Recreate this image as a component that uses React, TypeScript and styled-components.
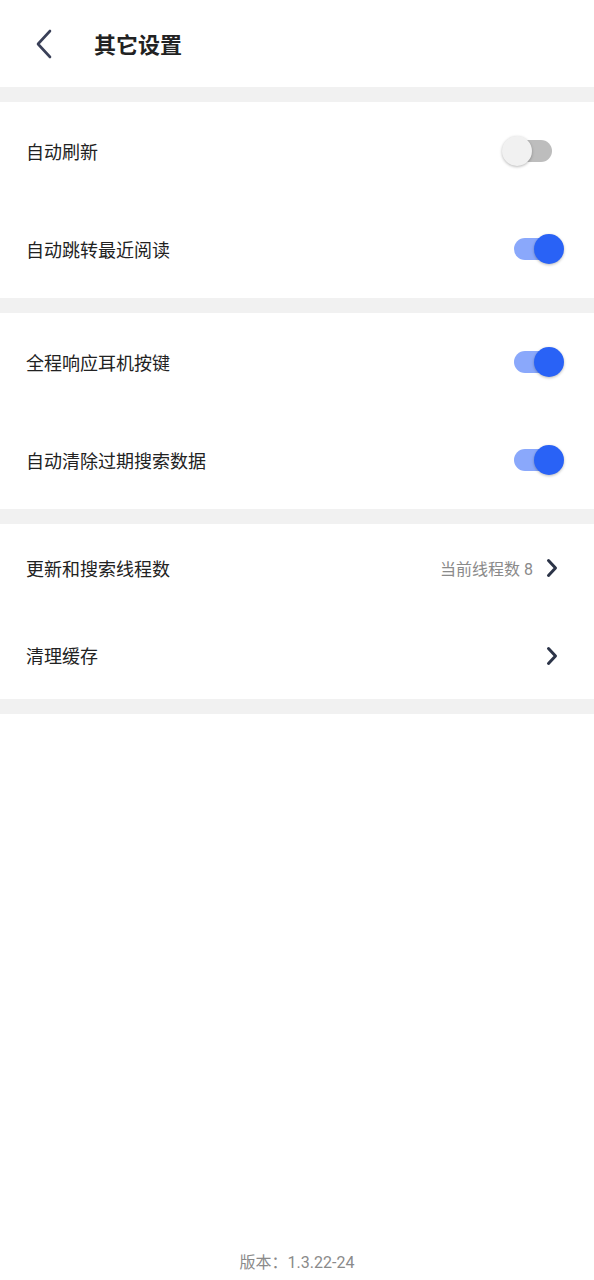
import React, { useState } from "react";
import styled, { createGlobalStyle } from "styled-components";

const Global = createGlobalStyle`
  html, body { margin: 0; padding: 0; background: #fff; }
  body { font-family: Roboto, "Noto Sans CJK SC", sans-serif; }
`;

const Page = styled.div`
  width: 594px;
  height: 1280px;
  display: flex;
  flex-direction: column;
  background: #fff;
`;

const Header = styled.div`
  height: 87px;
  display: flex;
  align-items: center;
`;

const BackButton = styled.div`
  width: 94px;
  height: 87px;
  display: flex;
  align-items: center;
  padding-left: 34px;
  box-sizing: border-box;
`;

const Title = styled.div`
  font-size: 22px;
  font-weight: 700;
  color: #222;
  font-family: "Noto Sans CJK SC", sans-serif;
  margin-top: -1px;
`;

const Divider = styled.div`
  height: 15px;
  background: #f1f1f1;
  flex-shrink: 0;
`;

const Row = styled.div<{ $h: number }>`
  height: ${(p) => p.$h}px;
  display: flex;
  align-items: center;
  padding-left: 26px;
  box-sizing: border-box;
`;

const Label = styled.div`
  flex: 1;
  font-size: 18px;
  color: #222;
  font-family: "Noto Sans CJK SC", sans-serif;
  margin-top: -1px;
`;

const Value = styled.div`
  font-size: 16px;
  color: #8a8a8a;
  font-family: Roboto, "Noto Sans CJK SC", sans-serif;
  margin-right: 13px;
`;

const ChevronWrap = styled.div`
  margin-right: 36px;
  display: flex;
  align-items: center;
`;

const SwitchBox = styled.div<{ $mr: number }>`
  position: relative;
  width: 50px;
  height: 32px;
  margin-right: ${(p) => p.$mr}px;
  cursor: pointer;
`;

const Track = styled.div<{ $on: boolean }>`
  position: absolute;
  top: 5px;
  height: 22px;
  border-radius: 11px;
  left: ${(p) => (p.$on ? "0" : "9px")};
  right: ${(p) => (p.$on ? "9px" : "0")};
  background: ${(p) => (p.$on ? "#8aa8fb" : "#bdbdbd")};
`;

const Thumb = styled.div<{ $on: boolean }>`
  position: absolute;
  top: 1px;
  width: 30px;
  height: 30px;
  border-radius: 50%;
  left: ${(p) => (p.$on ? "20px" : "0")};
  background: ${(p) => (p.$on ? "#2962f6" : "#f1f1f1")};
  box-shadow: 0 1px 3px rgba(0, 0, 0, 0.28);
`;

const Spacer = styled.div`
  flex: 1;
`;

const Footer = styled.div`
  height: 34px;
  line-height: 34px;
  text-align: center;
  font-size: 16px;
  color: #8a8a8a;
  font-family: Roboto, "Noto Sans CJK SC", sans-serif;
`;

const Switch = ({ initial, mr }: { initial: boolean; mr: number }) => {
  const [on, setOn] = useState(initial);
  return (
    <SwitchBox $mr={mr} onClick={() => setOn(!on)}>
      <Track $on={on} />
      <Thumb $on={on} />
    </SwitchBox>
  );
};

const Chevron = () => (
  <svg width="12" height="20" viewBox="0 0 12 20">
    <path d="M2.5 2.5 L9.5 10 L2.5 17.5" fill="none" stroke="#2c3448" strokeWidth="3" strokeLinecap="round" strokeLinejoin="round" />
  </svg>
);

export default function App() {
  return (
    <Page>
      <Global />
      <Header>
        <BackButton>
          <svg width="20" height="30" viewBox="0 0 20 30">
            <path d="M16 2 L4 15 L16 28" fill="none" stroke="#3a4058" strokeWidth="2.6" strokeLinecap="round" strokeLinejoin="round" />
          </svg>
        </BackButton>
        <Title>其它设置</Title>
      </Header>
      <Divider />
      <Row $h={98}>
        <Label>自动刷新</Label>
        <Switch initial={false} mr={42} />
      </Row>
      <Row $h={98}>
        <Label>自动跳转最近阅读</Label>
        <Switch initial={true} mr={30} />
      </Row>
      <Divider />
      <Row $h={98}>
        <Label>全程响应耳机按键</Label>
        <Switch initial={true} mr={30} />
      </Row>
      <Row $h={98}>
        <Label>自动清除过期搜索数据</Label>
        <Switch initial={true} mr={30} />
      </Row>
      <Divider />
      <Row $h={88}>
        <Label>更新和搜索线程数</Label>
        <Value>当前线程数 8</Value>
        <ChevronWrap>
          <Chevron />
        </ChevronWrap>
      </Row>
      <Row $h={87}>
        <Label>清理缓存</Label>
        <ChevronWrap>
          <Chevron />
        </ChevronWrap>
      </Row>
      <Divider />
      <Spacer />
      <Footer>版本：1.3.22-24</Footer>
    </Page>
  );
}
